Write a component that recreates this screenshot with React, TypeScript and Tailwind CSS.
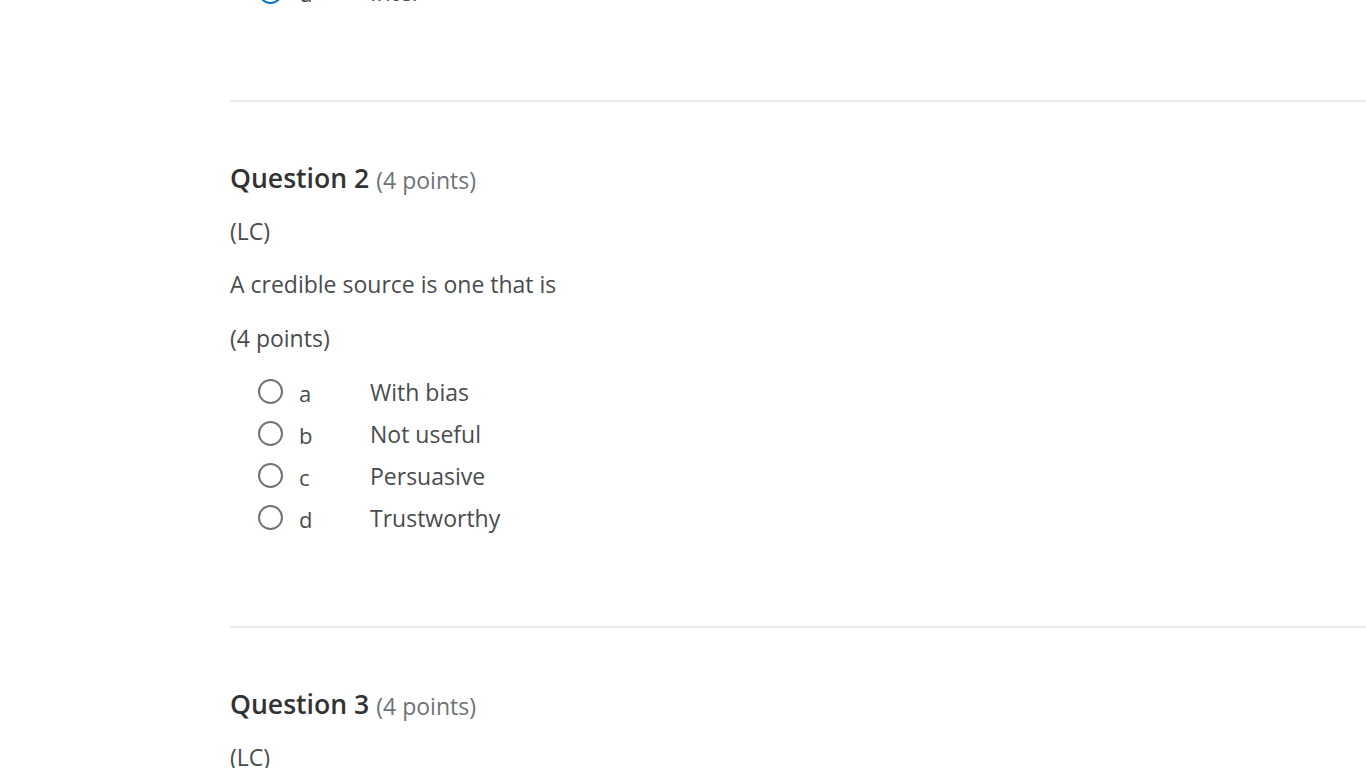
import React from 'react';

type Option = { letter: string; text: string; selected?: boolean };

const q2Options: Option[] = [
  { letter: 'a', text: 'With bias' },
  { letter: 'b', text: 'Not useful' },
  { letter: 'c', text: 'Persuasive' },
  { letter: 'd', text: 'Trustworthy' },
];

function Radio({ selected }: { selected?: boolean }) {
  if (selected) {
    return (
      <span className="flex h-[25px] w-[25px] shrink-0 items-center justify-center rounded-full border-2 border-[#006fbf] bg-white">
        <span className="h-[13px] w-[13px] rounded-full bg-[#006fbf]" />
      </span>
    );
  }
  return <span className="block h-[25px] w-[25px] shrink-0 rounded-full border-2 border-[#6e7376] bg-white" />;
}

function OptionRow({ option }: { option: Option }) {
  return (
    <div className="flex h-[42px] items-center pl-[28px] text-[#494c4e]">
      <Radio selected={option.selected} />
      <span className="w-[87px] pl-[16px] pt-[5px] text-[22px]">{option.letter}</span>
      <span className="pt-[2px] text-[23px]">{option.text}</span>
    </div>
  );
}

function Divider() {
  return <div className="h-[2px] w-full bg-[#e8e8e8]" />;
}

function QuestionHeading({ n }: { n: number }) {
  return (
    <h2 className="flex h-[40px] items-center text-[26.6px] font-semibold text-[#333333]">
      Question {n}
      <span className="ml-[7px] pt-[2px] text-[23px] font-normal text-[#6e7376]">(4 points)</span>
    </h2>
  );
}

export default function App() {
  return (
    <div
      className="h-[768px] overflow-hidden bg-white pl-[230px]"
      style={{ fontFamily: '"Open Sans", "Liberation Sans", sans-serif' }}
    >
      <div className="-mt-[30px]">
        <OptionRow option={{ letter: 'd', text: 'Inter', selected: true }} />
      </div>

      <div className="mt-[88px]">
        <Divider />
      </div>

      <section className="pt-[57px]">
        <QuestionHeading n={2} />
        <p className="mt-[16px] text-[23px] leading-[33px] text-[#494c4e]">(LC)</p>
        <p className="mt-[20px] text-[23px] leading-[33px] text-[#494c4e]">A credible source is one that is</p>
        <p className="mt-[21px] text-[23px] leading-[33px] text-[#494c4e]">(4 points)</p>
        <div className="mt-[15px]">
          {q2Options.map((o) => (
            <OptionRow key={o.letter} option={o} />
          ))}
        </div>
      </section>

      <div className="mt-[88px]">
        <Divider />
      </div>

      <section className="pt-[57px]">
        <QuestionHeading n={3} />
        <p className="mt-[16px] text-[23px] leading-[33px] text-[#494c4e]">(LC)</p>
      </section>
    </div>
  );
}
